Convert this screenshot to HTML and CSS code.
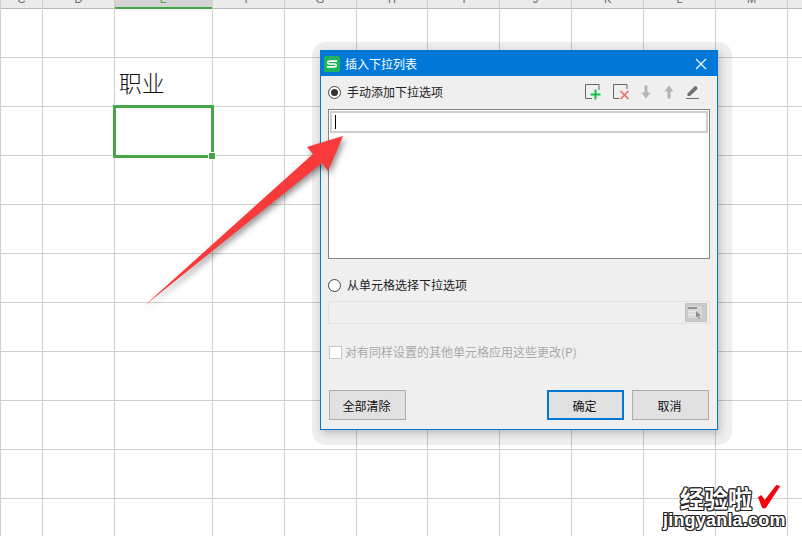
FILE: index.html
```html
<!DOCTYPE html>
<html lang="zh-CN">

<head>
  <meta charset="UTF-8">
  <meta name="viewport" content="width=device-width, initial-scale=1.0">
  <title>插入下拉列表</title>
  <link rel="stylesheet" href="styles.css">
</head>

<body>
  <div class="sheet">
    <div class="col col-first"><div class="col-head">C</div><div class="col-body"></div></div>
    <div class="col col-d"><div class="col-head">D</div><div class="col-body"></div></div>
    <div class="col col-e">
      <div class="col-head selected">E</div>
      <div class="col-body">
        <div class="cell"></div>
        <div class="cell cell-text">职业</div>
        <div class="cell cell-active"><span class="fill-handle"></span></div>
      </div>
    </div>
    <div class="col"><div class="col-head">F</div><div class="col-body"></div></div>
    <div class="col"><div class="col-head">G</div><div class="col-body"></div></div>
    <div class="col"><div class="col-head">H</div><div class="col-body"></div></div>
    <div class="col"><div class="col-head">I</div><div class="col-body"></div></div>
    <div class="col"><div class="col-head">J</div><div class="col-body"></div></div>
    <div class="col"><div class="col-head">K</div><div class="col-body"></div></div>
    <div class="col"><div class="col-head">L</div><div class="col-body"></div></div>
    <div class="col"><div class="col-head">M</div><div class="col-body"></div></div>
    <div class="col col-last"><div class="col-head"></div><div class="col-body"></div></div>
  </div>

  <div class="halo">
    <div class="dialog">
      <div class="titlebar">
        <span class="app-icon">
          <svg width="16" height="16" viewBox="0 0 16 16">
            <rect width="16" height="16" rx="2.5" fill="#1fb45a" />
            <path d="M13 5.2H5.4Q3.8 5.2 3.8 6.6T5.4 8H10.6Q12.2 8 12.2 9.4T10.6 10.8H3" fill="none" stroke="#fff" stroke-width="1.7" />
          </svg>
        </span>
        <span class="title">插入下拉列表</span>
        <svg class="close" width="12" height="12" viewBox="0 0 12 12">
          <path d="M1 1L11 11M11 1L1 11" stroke="#fff" stroke-width="1.1" />
        </svg>
      </div>

      <div class="content">
        <div class="option-row">
          <span class="radio checked"></span>
          <span class="option-label">手动添加下拉选项</span>
          <div class="toolbar">
            <span class="tool tool-add">
              <svg width="16" height="16" viewBox="0 0 16 16">
                <path d="M7 14.5H.5V.5H14V6" fill="none" stroke="#666" />
                <path d="M5.5 10.5H15.5M10.5 5.5V15.5" stroke="#0ec24a" stroke-width="2" />
              </svg>
            </span>
            <span class="tool tool-del">
              <svg width="17" height="16" viewBox="0 0 17 16">
                <path d="M6 14.5H.5V.5H14V5" fill="none" stroke="#666" />
                <path d="M7.5 7L15.5 15M15.5 7L7.5 15" stroke="#ee6a6a" stroke-width="1.7" />
              </svg>
            </span>
            <span class="tool">
              <svg width="16" height="16" viewBox="0 0 16 16">
                <path d="M6.5 1.5H9.5V8.5H12.5L8 14.5L3.5 8.5H6.5Z" fill="#b4b4b4" />
              </svg>
            </span>
            <span class="tool">
              <svg width="16" height="16" viewBox="0 0 16 16">
                <path d="M6.5 14.5H9.5V7.5H12.5L8 1.5L3.5 7.5H6.5Z" fill="#b4b4b4" />
              </svg>
            </span>
            <span class="tool tool-last">
              <svg width="16" height="16" viewBox="0 0 16 16">
                <path d="M3.5 9.5L10.5 2.5Q11.5 1.5 12.8 2.7T13 5.5L6 12H3.5Z" fill="#707070" />
                <path d="M2 14.5H15" stroke="#707070" />
              </svg>
            </span>
          </div>
        </div>

        <div class="listbox">
          <div class="list-input"><span class="caret"></span></div>
        </div>

        <div class="option-row option-second">
          <span class="radio"></span>
          <span class="option-label">从单元格选择下拉选项</span>
        </div>

        <div class="range-field">
          <span class="range-btn">
            <svg width="18" height="15" viewBox="0 0 18 15">
              <path d="M1 1H15V13H1Z" fill="#d8d8d8" />
              <path d="M1 2H10V4H1Z" fill="#939393" />
              <path d="M1 6H8V7H1ZM1 9H8V10H1Z" fill="#ececec" />
              <path d="M9 6L14 10.5L12 10.8L13 13.5L11.8 14L10.7 11.3L9 12.5Z" fill="#8e8e8e" />
            </svg>
          </span>
        </div>

        <div class="apply-row">
          <span class="checkbox"></span>
          <span class="apply-label">对有同样设置的其他单元格应用这些更改(P)</span>
        </div>

        <div class="footer">
          <button class="btn">全部清除</button>
          <span class="footer-gap"></span>
          <button class="btn btn-primary">确定</button>
          <button class="btn">取消</button>
        </div>
      </div>
    </div>
  </div>

  <svg class="arrow" width="802" height="536" viewBox="0 0 802 536">
    <path d="M144 306L313 154L307 147L343 136L328 171L322 163Z" fill="#f93a3a" />
  </svg>

  <div class="watermark">
    <div class="wm-top">
      <span class="wm-cn">经验啦</span>
      <svg class="wm-check" width="24" height="24" viewBox="0 0 24 24">
        <path d="M0 12.3L3.3 10L6.7 15L18.3 0L22.3 1L7.7 23.3H4.3Z" fill="#f5000c" />
      </svg>
    </div>
    <div class="wm-url">jingyanla.com</div>
  </div>
</body>

</html>
```

FILE: styles.css
```css
* {
  box-sizing: border-box;
}

body {
  margin: 0;
  width: 802px;
  height: 536px;
  overflow: hidden;
  background-color: #fff;
  font-family: "Noto Sans CJK SC", "Liberation Sans", sans-serif;
  font-size: 12px;
  color: #222;
}

/* spreadsheet behind the dialog */

.sheet {
  display: flex;
  height: 536px;
}

.col {
  width: 72px;
  display: flex;
  flex-direction: column;
  border-right: 1px solid #d0d0d0;
}

.col-first {
  width: 43px;
  border-left: 1px solid #d0d0d0;
}

.col-e {
  width: 98px;
}

.col-last {
  width: 14px;
  border-right: none;
}

/* only the bottom of the column letters shows, the rest is scrolled off */
.col-head {
  display: flex;
  justify-content: center;
  align-items: flex-end;
  height: 9px;
  flex-shrink: 0;
  overflow: hidden;
  padding-bottom: 5px;
  font-family: "Liberation Sans", sans-serif;
  font-size: 11px;
  line-height: 8px;
  color: #666;
  background-color: #ebebeb;
  border-bottom: 1px solid #b8b8b8;
}

.col-head.selected {
  padding-bottom: 4px;
  color: #3fa548;
  background-color: #d4d4d4;
  border-bottom: 2px solid #43a648;
}

.col-body {
  flex: 1;
  background-image: repeating-linear-gradient(to bottom, transparent 0, transparent 48px, #d0d0d0 48px, #d0d0d0 49px);
}

.cell {
  position: relative;
  height: 49px;
}

.cell-text {
  padding: 8px 0 0 4px;
  font-size: 23px;
  font-weight: 300;
  line-height: 32px;
  color: #111;
}

.cell-active::after {
  content: "";
  position: absolute;
  left: -2px;
  top: -2px;
  right: -2px;
  bottom: -2px;
  border: 3px solid #43a648;
}

.fill-handle {
  position: absolute;
  z-index: 1;
  right: -3px;
  bottom: -3px;
  width: 6px;
  height: 6px;
  background-color: #43a648;
  outline: 1px solid #fff;
}

/* dialog */

.halo {
  position: absolute;
  left: 312px;
  top: 42px;
  width: 420px;
  height: 403px;
  padding: 8px 14px 15px 8px;
  border-radius: 14px;
  background-color: rgba(0, 0, 0, 0.065);
}

.dialog {
  display: flex;
  flex-direction: column;
  height: 380px;
  border: 1px solid #0078d7;
  background-color: #efefef;
  box-shadow: 2px 3px 8px rgba(0, 0, 0, 0.22);
}

.titlebar {
  display: flex;
  align-items: center;
  height: 25px;
  flex-shrink: 0;
  padding: 0 10px 0 3px;
  background-color: #0078d7;
  color: #fff;
}

.app-icon {
  display: flex;
  margin-right: 5px;
}

.close {
  margin-left: auto;
}

.content {
  flex: 1;
  display: flex;
  flex-direction: column;
  padding: 6px 7px 9px;
}

.option-row {
  display: flex;
  align-items: center;
  height: 20px;
}

.option-second {
  margin-top: 16px;
}

.option-label {
  margin-top: -2px;
}

.radio {
  position: relative;
  width: 13px;
  height: 13px;
  margin-right: 6px;
  border: 1px solid #444;
  border-radius: 50%;
  background-color: #fff;
}

.radio.checked::after {
  content: "";
  position: absolute;
  left: 2px;
  top: 2px;
  width: 7px;
  height: 7px;
  border-radius: 50%;
  background-color: #333;
}

.toolbar {
  display: flex;
  margin-left: auto;
  margin-right: 10px;
}

.tool {
  display: flex;
  width: 23px;
}

.tool-add {
  width: 28px;
}

.tool-del {
  width: 25px;
}

.tool-last {
  width: 16px;
}

.listbox {
  height: 150px;
  margin-top: 7px;
  padding: 1px;
  border: 1px solid #84848c;
  background-color: #fff;
}

.list-input {
  height: 22px;
  padding: 2px 3px;
  border: 2px solid #cdcdcd;
  background-color: #fff;
}

.caret {
  display: block;
  width: 1px;
  height: 14px;
  background-color: #000;
}

.range-field {
  display: flex;
  justify-content: flex-end;
  align-items: center;
  height: 23px;
  margin-top: 6px;
  padding-right: 2px;
  border: 1px solid #e2e2e2;
}

.range-btn {
  display: flex;
  align-items: center;
  justify-content: center;
  width: 22px;
  height: 19px;
  border: 1px solid #c4c4c4;
  background-color: #cacaca;
}

.apply-row {
  display: flex;
  align-items: center;
  height: 20px;
  margin-top: 18px;
  padding-left: 1px;
}

.checkbox {
  width: 13px;
  height: 13px;
  margin-right: 4px;
  border: 1px solid #c6c6c6;
  background-color: #fff;
}

.apply-label {
  margin-top: -2px;
  margin-left: -1px;
  color: #a9a9a9;
}

.footer {
  display: flex;
  gap: 8px;
  margin-top: auto;
  padding: 0 1px;
}

.footer-gap {
  flex: 1;
}

.btn {
  width: 77px;
  height: 30px;
  padding: 0 2px 0 0;
  border: 1px solid #adadad;
  background-color: #e1e1e1;
  font-family: inherit;
  font-size: 12px;
  color: #111;
}

.btn-primary {
  border: 2px solid #0078d7;
}

/* red arrow painted on top of the screenshot */

.arrow {
  position: absolute;
  left: 0;
  top: 0;
  filter: drop-shadow(2px 3px 3px rgba(0, 0, 0, 0.45));
}

/* watermark */

.watermark {
  position: absolute;
  left: 663px;
  top: 484px;
  width: 125px;
  color: #fff;
  font-weight: 700;
  text-shadow: -1px 0 0 #222, 1px 0 0 #222, 0 -1px 0 #222, 0 1px 0 #222, -1px -1px 0 #222, 1px 1px 0 #222, 1px -1px 0 #222, -1px 1px 0 #222;
}

.wm-top {
  display: flex;
  align-items: flex-start;
  height: 27px;
  padding-left: 17px;
}

.wm-cn {
  font-size: 24px;
  line-height: 27px;
}

.wm-check {
  margin: 1px 0 0 6px;
}

.wm-url {
  font-family: "Liberation Sans", sans-serif;
  font-size: 18px;
  line-height: 19px;
  letter-spacing: 0.2px;
  white-space: nowrap;
}
```
